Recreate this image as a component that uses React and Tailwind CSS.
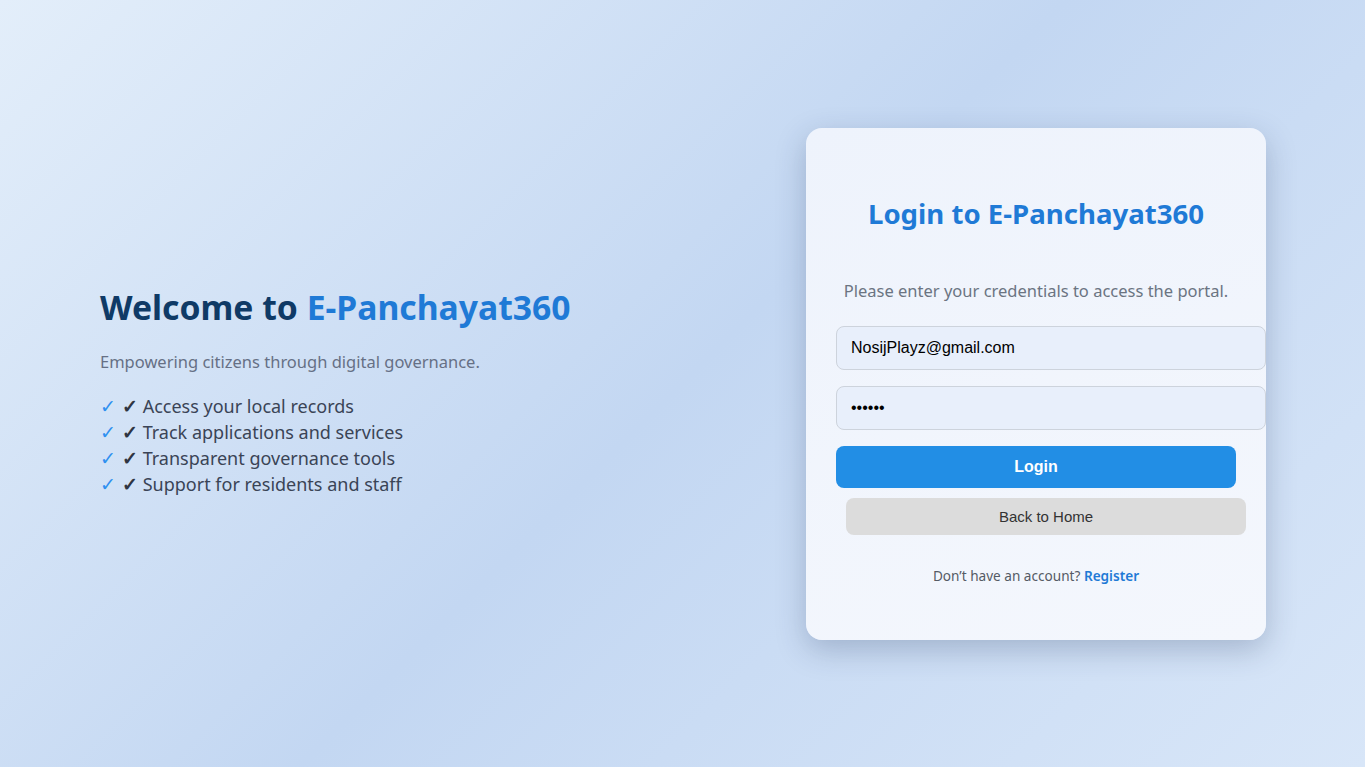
import React from "react";

export default function App() {
  const items = [
    "Access your local records",
    "Track applications and services",
    "Transparent governance tools",
    "Support for residents and staff",
  ];
  return (
    <div
      className="min-h-screen w-full flex items-center justify-between pl-[100px] pr-[99px] bg-[linear-gradient(135deg,#e3eefa_0%,#c3d7f2_50%,#d8e6f8_100%)]"
      style={{ fontFamily: '"Noto Sans", "Open Sans", sans-serif' }}
    >
      <div className="flex flex-col mt-[15px]">
        <h1 className="text-[33.7px] leading-[44px] font-bold text-[#0f3a66] m-0">
          Welcome to <span className="text-[#1f7ad6]">E-Panchayat360</span>
        </h1>
        <p className="mt-[21px] text-[16.5px] leading-[24px] text-[#667085]">
          Empowering citizens through digital governance.
        </p>
        <ul className="mt-[19px] flex flex-col">
          {items.map((t) => (
            <li key={t} className="h-[26px] text-[18px] leading-[26px] text-[#3a4456]">
              <span className="text-[#2e90f0] mr-[6px] text-[19px] leading-[26px]">✓</span>
              <span className="text-[#2f3542] text-[19px] font-bold leading-[26px]">✓</span> {t}
            </li>
          ))}
        </ul>
      </div>

      <div className="w-[460px] h-[512px] rounded-[16px] px-[30px] pt-[68px] flex flex-col bg-[linear-gradient(160deg,#eef3fc_0%,#f4f7fd_100%)] shadow-[0_10px_30px_rgba(30,50,90,0.25)]">
        <h2 className="text-center text-[27.6px] leading-[34px] font-bold text-[#1f7ad6]">
          Login to E-Panchayat360
        </h2>
        <p className="mt-[49px] text-center text-[16.5px] leading-[24px] text-[#6b7482]">
          Please enter your credentials to access the portal.
        </p>
        <input
          type="email"
          defaultValue="NosijPlayz@gmail.com"
          className="mt-[23px] w-[430px] h-[44px] shrink-0 rounded-[8px] border border-[#cdd3dc] bg-[#e8effb] pl-[14px] text-[16px] text-black outline-none"
          style={{ fontFamily: '"Liberation Sans", Arial, sans-serif' }}
        />
        <input
          type="password"
          defaultValue="123456"
          className="mt-[16px] w-[430px] h-[44px] shrink-0 rounded-[8px] border border-[#cdd3dc] bg-[#e8effb] pl-[14px] text-[16px] text-black outline-none"
          style={{ fontFamily: '"Liberation Sans", Arial, sans-serif' }}
        />
        <button
          className="mt-[16px] w-[400px] h-[42px] shrink-0 rounded-[8px] bg-[#228ee5] text-white text-[16px] font-bold"
          style={{ fontFamily: '"Liberation Sans", Arial, sans-serif' }}
        >
          Login
        </button>
        <button
          className="mt-[10px] ml-[10px] w-[400px] h-[37px] shrink-0 rounded-[8px] bg-[#dcdcdc] text-[#333333] text-[15px] pt-[2px]"
          style={{ fontFamily: '"Liberation Sans", Arial, sans-serif' }}
        >
          Back to Home
        </button>
        <p className="mt-[32px] text-center text-[13.6px] leading-[18px] text-[#555b65]">
          Don’t have an account?{" "}
          <a className="text-[#1f7ad6] font-semibold">Register</a>
        </p>
      </div>
    </div>
  );
}
